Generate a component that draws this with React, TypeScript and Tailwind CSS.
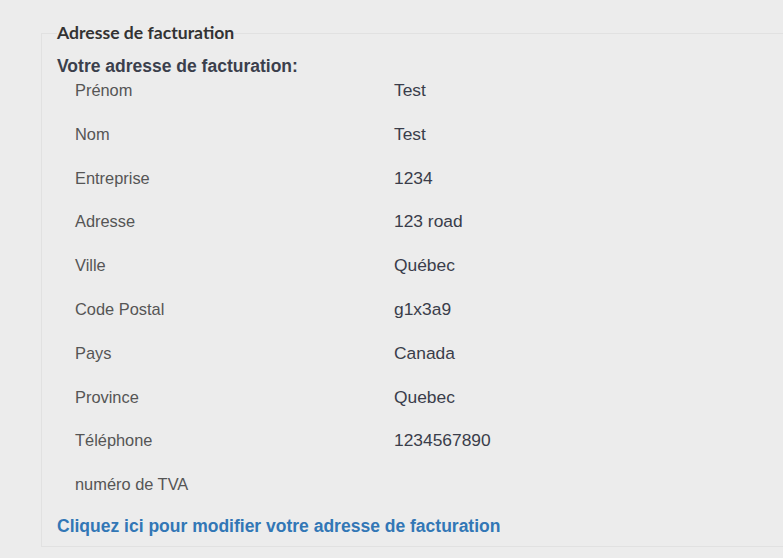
import React from "react";

const rows: [string, string][] = [
  ["Prénom", "Test"],
  ["Nom", "Test"],
  ["Entreprise", "1234"],
  ["Adresse", "123 road"],
  ["Ville", "Québec"],
  ["Code Postal", "g1x3a9"],
  ["Pays", "Canada"],
  ["Province", "Quebec"],
  ["Téléphone", "1234567890"],
  ["numéro de TVA", ""],
];

export default function App() {
  return (
    <div className="w-[783px] h-[558px] bg-[#ececec] overflow-hidden pt-[21px] pl-[41px]">
      <fieldset className="border border-[#e1e1e1] border-r-0 w-[760px] pl-[15px] pb-[8px]">
        <legend className="font-['Lato',sans-serif] font-bold text-[17.6px] leading-[24px] text-[#333333]">
          Adresse de facturation
        </legend>
        <div className="mt-[9px] font-['Liberation_Sans',Arial,sans-serif] font-bold text-[17.5px] leading-[24px] text-[#3b3f4c]">
          Votre adresse de facturation:
        </div>
        <div className="flex flex-col font-['Liberation_Sans',Arial,sans-serif]">
          {rows.map(([label, value]) => (
            <div key={label} className="flex h-[43.8px]">
              <div className="w-[337px] pl-[18px] text-[16.4px] leading-[24px] text-[#555555]">{label}</div>
              <div className="text-[17.4px] leading-[24px] text-[#3a3d4a]">{value}</div>
            </div>
          ))}
        </div>
        <div className="-mt-[2px] font-['Liberation_Sans',Arial,sans-serif] font-bold text-[17.5px] leading-[24px] text-[#3277b6]">
          Cliquez ici pour modifier votre adresse de facturation
        </div>
      </fieldset>
    </div>
  );
}
